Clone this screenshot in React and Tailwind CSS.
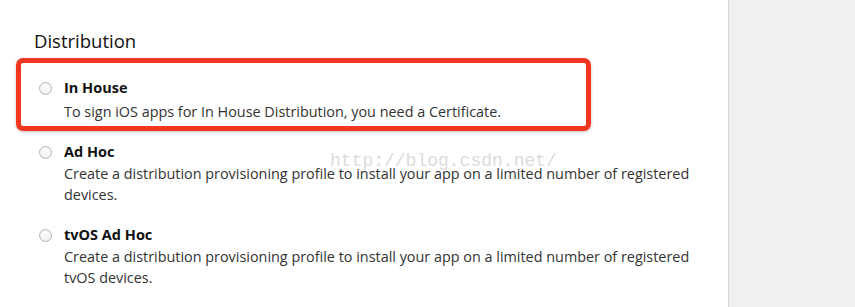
const options = [
  {
    id: "inhouse",
    title: "In House",
    desc: "To sign iOS apps for In House Distribution, you need a Certificate.",
  },
  {
    id: "adhoc",
    title: "Ad Hoc",
    desc: "Create a distribution provisioning profile to install your app on a limited number of registered devices.",
  },
  {
    id: "tvos",
    title: "tvOS Ad Hoc",
    desc: "Create a distribution provisioning profile to install your app on a limited number of registered tvOS devices.",
  },
];

function Radio() {
  return (
    <span className="mt-[5px] h-[13px] w-[13px] shrink-0 rounded-full border border-[#b4b4b4] bg-gradient-to-b from-white to-[#f1f1f1] shadow-[inset_0_1px_1px_rgba(0,0,0,0.06)]" />
  );
}

function Option({ item, roomy }) {
  return (
    <label className="flex gap-[12px]">
      <Radio />
      <div className="w-[645px]">
        <div className={`text-[14.5px] font-bold leading-[22px] text-[#111] ${roomy ? "mb-[2px]" : ""}`}>
          {item.title}
        </div>
        <div className="text-[14.4px] leading-[21px] text-[#333]">{item.desc}</div>
      </div>
    </label>
  );
}

export default function App() {
  return (
    <div
      className="flex h-[307px] w-[855px] overflow-hidden bg-[#f0f0f0]"
      style={{ fontFamily: '"Open Sans", "Liberation Sans", sans-serif' }}
    >
      <main className="relative h-full w-[729px] shrink-0 border-r border-[#d9d9d9] bg-white">
        <h2 className="pl-[34px] pt-[29px] text-[18.5px] leading-[24px] text-[#111]">Distribution</h2>

        <div className="mt-[5px] ml-[16px] w-[575px] rounded-[7px] border-[5px] border-[#f2361f] pl-[18px] pt-[14px] pb-[4px] shadow-[0_1px_3px_rgba(0,0,0,0.25)]">
          <Option item={options[0]} roomy />
        </div>

        <div className="mt-[10px] flex flex-col gap-[19px] pl-[39px]">
          <Option item={options[1]} />
          <Option item={options[2]} />
        </div>

        <span
          className="absolute left-[330px] top-[148px] text-[18px] text-[#dcdcdc]"
          style={{ fontFamily: '"Liberation Mono", monospace' }}
        >
          http://blog.csdn.net/
        </span>
      </main>
    </div>
  );
}
